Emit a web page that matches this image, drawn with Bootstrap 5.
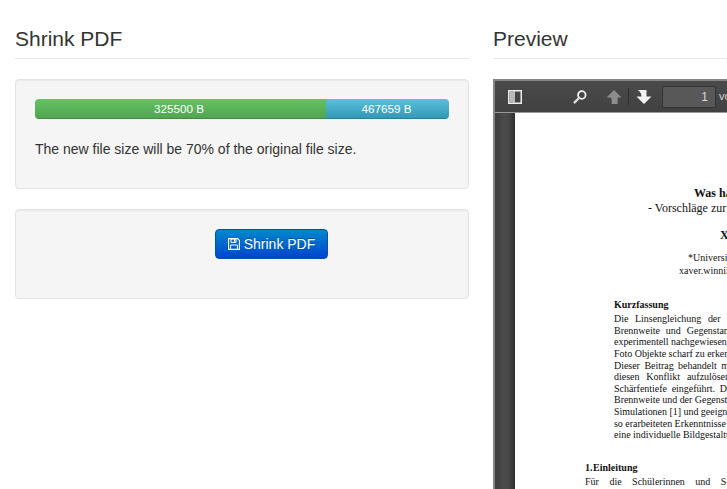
<!DOCTYPE html>
<html lang="de">
<head>
<meta charset="utf-8">
<title>Shrink PDF</title>
<link href="https://cdn.jsdelivr.net/npm/bootstrap@5.3.0/dist/css/bootstrap.min.css" rel="stylesheet">
<style>
html,body{overflow:hidden;height:489px;}
body{width:727px;font-family:"Liberation Sans",Arial,sans-serif;font-size:14px;color:#333;background:#fff;}
.page-cols{width:932px;padding:0 0 0 15px;gap:24px;}
.side-col{width:454px;flex:none;}
.head-title{font-size:21px;font-weight:400;line-height:23px;color:#333;margin:0;padding:27px 0 8px;border-bottom:1px solid #e6e6e6;height:59px;}
.well-box{background:#f5f5f5;border:1px solid #e3e3e3;border-radius:4px;padding:19px;box-shadow:inset 0 1px 1px rgba(0,0,0,.05);}
.well-first{margin-top:20px;height:110px;}
.well-second{margin-top:20px;height:90px;}
.size-bar{height:20px;width:414px;border-radius:4px;font-size:11.7px;background:#f5f5f5;}
.bar-done{width:291px;color:#fff;background:linear-gradient(#62c462,#51a351);box-shadow:inset 0 -1px 0 rgba(0,0,0,.15);padding-right:3px;}
.bar-rest{width:123px;color:#fff;background:linear-gradient(#5bc0de,#2f96b4);box-shadow:inset 0 -1px 0 rgba(0,0,0,.15);padding-right:2px;}
.size-note{margin:20px 0 0;line-height:20px;color:#333;}
.shrink-btn{margin:0 0 0 180px;width:113px;height:30px;padding:0;font-size:14px;line-height:28px;color:#fff;border:1px solid #0050b4;border-radius:4px;background:linear-gradient(#0088cc,#0044cc);text-shadow:0 -1px 0 rgba(0,0,0,.25);}
.shrink-btn svg{vertical-align:-1px;margin-right:4px;}
.viewer{margin-top:20px;width:454px;height:420px;border:2px solid #868686;border-right:0;border-bottom:0;background:#404040;overflow:hidden;}
.viewer-bar{height:32px;background:linear-gradient(#4a4a4a,#414141);border-bottom:1px solid #9a9a9a;padding-left:13px;}
.tool-sep{width:1px;height:17px;background:#2d2d2d;margin:0 7px 0 6px;}
.tool-gap-a{margin-left:50px;}
.tool-gap-b{margin-left:18px;}
.page-num{width:54px;height:22px;margin-left:10px;border:1px solid #333;border-radius:2px;background:#585858;color:#d9d9d9;font-size:12px;line-height:20px;text-align:right;padding-right:7px;}
.zoom-label{margin-left:3px;font-size:11px;color:#d9d9d9;white-space:nowrap;}
.viewer-body{height:387px;}
.thumb-strip{width:20px;flex:none;background:linear-gradient(90deg,#3d3d3d,#4b4b4b 45%,#474747 70%,#2e2e2e);}
.pdf-sheet{width:430px;flex:none;background:#fff;color:#111;font-family:"Liberation Serif","Times New Roman",serif;font-size:10px;line-height:11.62px;white-space:nowrap;overflow:hidden;padding-top:73px;}
.pdf-sheet p{margin:0;}
.title-a{margin-left:179px!important;font-size:12px;font-weight:700;line-height:14px;}
.title-b{margin-left:133px!important;font-size:12px;line-height:14px;margin-top:1px!important;}
.title-c{margin-left:205px!important;font-size:12px;font-weight:700;line-height:14px;margin-top:13px!important;}
.addr-a{margin-left:173px!important;margin-top:10px!important;line-height:12px;}
.addr-b{margin-left:164px!important;margin-top:1px!important;line-height:12px;}
.abs-head{margin:22px 0 0 99px!important;font-weight:700;line-height:12px;}
.abs-line{margin-left:99px!important;letter-spacing:-.03px;}
.first-abs{margin-top:2px!important;}
.wide-1{word-spacing:4.2px;}
.wide-2{word-spacing:3.6px;}
.wide-3{word-spacing:2px;}
.wide-4{word-spacing:4.5px;}
.wide-5{word-spacing:2.3px;}
.sec-head{margin:21px 0 0 70px!important;font-weight:700;line-height:12px;word-spacing:-2px;}
.sec-line{margin:2px 0 0 70px!important;word-spacing:8px;}
</style>
</head>
<body>
<div class="d-flex page-cols">
  <div class="side-col">
    <h3 class="head-title">Shrink PDF</h3>
    <div class="well-box well-first">
      <div class="progress size-bar d-flex">
        <div class="progress-bar bar-done">325500 B</div>
        <div class="progress-bar bar-rest">467659 B</div>
      </div>
      <p class="size-note">The new file size will be 70% of the original file size.</p>
    </div>
    <div class="well-box well-second">
      <button type="button" class="btn shrink-btn d-block">
        <svg width="12" height="12" viewBox="0 0 12 12" aria-hidden="true"><path d="M.6.6h9l1.8 1.8v9H.6z" fill="none" stroke="#fff" stroke-width="1.1"/><path d="M3 1h5v3.4H3z" fill="none" stroke="#fff"/><rect x="6" y="1.4" width="1.2" height="2.4" fill="#fff"/><path d="M2.6 11V7h6.8v4" fill="none" stroke="#fff"/></svg>Shrink PDF
      </button>
    </div>
  </div>
  <div class="side-col">
    <h3 class="head-title">Preview</h3>
    <div class="viewer">
      <div class="viewer-bar d-flex align-items-center">
        <svg width="14" height="14" viewBox="0 0 14 14" aria-hidden="true"><rect x=".75" y=".75" width="12.5" height="12.5" fill="none" stroke="#eee" stroke-width="1.5"/><rect x="1.5" y="1.5" width="4" height="11" fill="#bbb"/><rect x="5.5" y="1" width="1.2" height="12" fill="#eee"/></svg>
        <svg class="tool-gap-a" width="16" height="16" viewBox="0 0 16 16" aria-hidden="true"><circle cx="9.8" cy="6" r="3.8" fill="none" stroke="#f2f2f2" stroke-width="1.8"/><path d="M7 9 2.6 13.4" stroke="#ddd" stroke-width="2.4" stroke-linecap="round"/></svg>
        <svg class="tool-gap-b" width="16" height="16" viewBox="0 0 16 16" aria-hidden="true"><path d="M8 1 15.5 8.4H11.6V15H5.5C6 12 5.8 10 4.7 8.4H.5z" fill="#8d8d8d"/></svg>
        <span class="tool-sep"></span>
        <svg width="16" height="16" viewBox="0 0 16 16" aria-hidden="true"><path d="M1.5 1H10.5V7.6H15.5L8 15 .5 7.6H5.5C5.5 5 4.5 2.5 1.5 1z" fill="#f2f2f2"/></svg>
        <span class="page-num">1</span>
        <span class="zoom-label">von</span>
      </div>
      <div class="viewer-body d-flex">
        <div class="thumb-strip"></div>
        <div class="pdf-sheet">
          <p class="title-a">Was hat die Linsengleichung mit der</p>
          <p class="title-b">- Vorschläge zur Behandlung im Physikunterricht</p>
          <p class="title-c">Xaver Winniller</p>
          <p class="addr-a">*Universität Augsburg</p>
          <p class="addr-b">xaver.winniller@physik.de</p>
          <p class="abs-head">Kurzfassung</p>
          <p class="abs-line first-abs wide-1">Die Linsengleichung der geometrischen</p>
          <p class="abs-line wide-2">Brennweite und Gegenstandsweite</p>
          <p class="abs-line">experimentell nachgewiesen werden</p>
          <p class="abs-line">Foto Objekte scharf zu erkennen sind</p>
          <p class="abs-line wide-3">Dieser Beitrag behandelt mögliche</p>
          <p class="abs-line wide-4">diesen Konflikt aufzulösen und zu</p>
          <p class="abs-line wide-5">Schärfentiefe eingeführt. Der Einfluss</p>
          <p class="abs-line">Brennweite und der Gegenstandsweite</p>
          <p class="abs-line">Simulationen [1] und geeignete Versuche</p>
          <p class="abs-line">so erarbeiteten Erkenntnisse ermöglichen</p>
          <p class="abs-line">eine individuelle Bildgestaltung</p>
          <p class="sec-head">1. Einleitung</p>
          <p class="sec-line">Für die Schülerinnen und Schüler</p>
        </div>
      </div>
    </div>
  </div>
</div>
<script src="https://cdn.jsdelivr.net/npm/bootstrap@5.3.0/dist/js/bootstrap.bundle.min.js"></script>
</body>
</html>
